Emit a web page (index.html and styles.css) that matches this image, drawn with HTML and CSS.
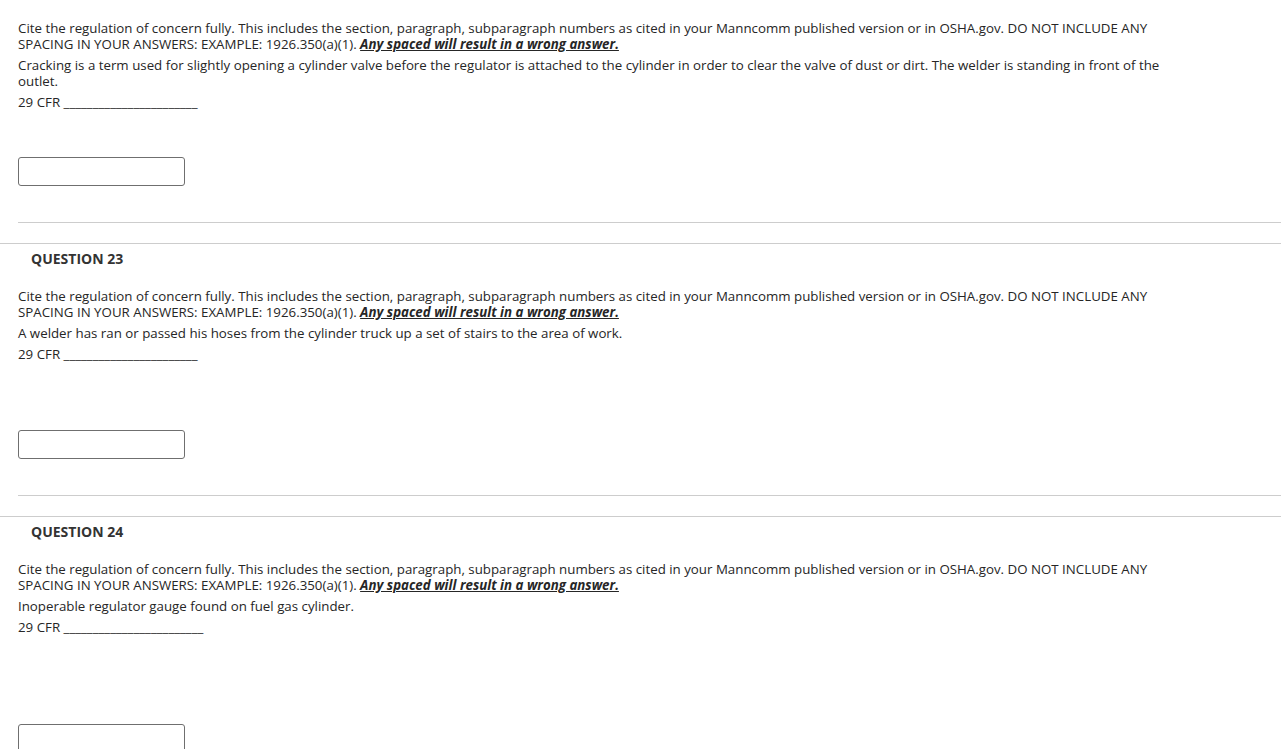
FILE: index.html
```html
<!DOCTYPE html>
<html>
<head>
<meta charset="utf-8">
<link rel="stylesheet" href="styles.css">
</head>
<body>
<div class="question first">
  <div class="content">
    <p>Cite the regulation of concern fully. This includes the section, paragraph, subparagraph numbers as cited in your Manncomm published version or in OSHA.gov. DO NOT INCLUDE ANY SPACING IN YOUR ANSWERS: EXAMPLE: 1926.350(a)(1). <em class="warn">Any spaced will result in a wrong answer.</em></p>
    <p>Cracking is a term used for slightly opening a cylinder valve before the regulator is attached to the cylinder in order to clear the valve of dust or dirt. The welder is standing in front of the outlet.</p>
    <p>29 CFR _______________________</p>
    <div class="answer"><input type="text" class="field"></div>
  </div>
</div>
<div class="question">
  <h3 class="title">QUESTION 23</h3>
  <div class="content">
    <p>Cite the regulation of concern fully. This includes the section, paragraph, subparagraph numbers as cited in your Manncomm published version or in OSHA.gov. DO NOT INCLUDE ANY SPACING IN YOUR ANSWERS: EXAMPLE: 1926.350(a)(1). <em class="warn">Any spaced will result in a wrong answer.</em></p>
    <p>A welder has ran or passed his hoses from the cylinder truck up a set of stairs to the area of work.</p>
    <p>29 CFR _______________________</p>
    <p class="blank">&nbsp;</p>
    <div class="answer"><input type="text" class="field"></div>
  </div>
</div>
<div class="question">
  <h3 class="title">QUESTION 24</h3>
  <div class="content">
    <p>Cite the regulation of concern fully. This includes the section, paragraph, subparagraph numbers as cited in your Manncomm published version or in OSHA.gov. DO NOT INCLUDE ANY SPACING IN YOUR ANSWERS: EXAMPLE: 1926.350(a)(1). <em class="warn">Any spaced will result in a wrong answer.</em></p>
    <p>Inoperable regulator gauge found on fuel gas cylinder.</p>
    <p>29 CFR ________________________</p>
    <p class="blank">&nbsp;</p>
    <p class="blank">&nbsp;</p>
    <div class="answer"><input type="text" class="field"></div>
  </div>
</div>
</body>
</html>
```
FILE: styles.css
```css
html, body {
  margin: 0;
  padding: 0;
  background: #fff;
}
body {
  font-family: "Open Sans", "Liberation Sans", sans-serif;
  font-size: 13.3px;
  line-height: 16px;
  color: #262626;
  overflow: hidden;
}
.question {
  border-top: 1px solid #cdcdcd;
  padding-bottom: 20px;
}
.question.first {
  border-top: none;
  padding-top: 20px;
}
.title {
  margin: 0;
  padding: 7px 0 0 31px;
  font-size: 14px;
  line-height: 16px;
  font-weight: 700;
  color: #333;
}
.question .title + .content {
  margin-top: 21px;
}
.content {
  margin-left: 18px;
  border-bottom: 1px solid #cdcdcd;
}
.content p {
  margin: 0 0 5px 0;
  max-width: 1160px;
}
.warn {
  font-weight: 700;
  font-style: italic;
  text-decoration: underline;
}
.answer {
  padding-top: 42px;
  padding-bottom: 36px;
}
.field {
  display: block;
  box-sizing: border-box;
  width: 167px;
  height: 29px;
  margin: 0;
  border: 1px solid #6f6f6f;
  border-radius: 3px;
  background: #fff;
  padding: 0 4px;
}
```
